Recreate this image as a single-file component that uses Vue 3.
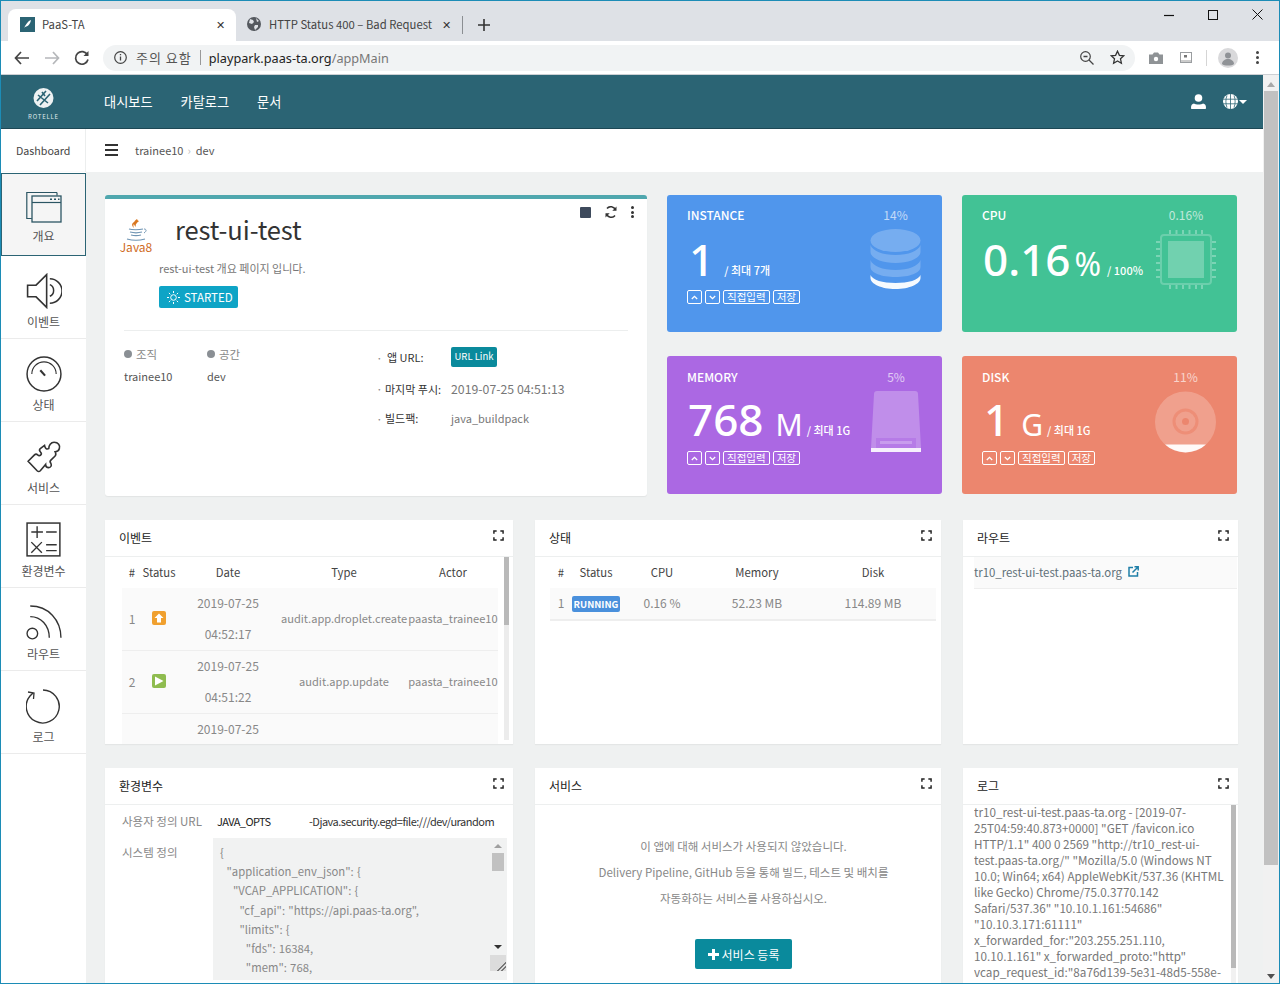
<script setup>
const sideItems = [
  { label: '개요', icon: 'i-overview', active: true },
  { label: '이벤트', icon: 'i-speaker' },
  { label: '상태', icon: 'i-gauge' },
  { label: '서비스', icon: 'i-puzzle' },
  { label: '환경변수', icon: 'i-calc' },
  { label: '라우트', icon: 'i-feed' },
  { label: '로그', icon: 'i-reload' }
]

const stats = [
  { key: 'instance', title: 'INSTANCE', pct: '14%', value: '1', unit: '', gap: true, limit: '/ 최대 7개', controls: true },
  { key: 'cpu', title: 'CPU', pct: '0.16%', value: '0.16', unit: '%', limit: '/ 100%', controls: false },
  { key: 'memory', title: 'MEMORY', pct: '5%', value: '768', unit: 'M', limit: '/ 최대 1G', controls: true },
  { key: 'disk', title: 'DISK', pct: '11%', value: '1', unit: 'G', limit: '/ 최대 1G', controls: true }
]

// the third row is only partly in view, its other cells never show
const events = [
  { no: 1, day: '2019-07-25', time: '04:52:17', kind: 'up', type: 'audit.app.droplet.create', actor: 'paasta_trainee10' },
  { no: 2, day: '2019-07-25', time: '04:51:22', kind: 'play', type: 'audit.app.update', actor: 'paasta_trainee10' },
  { no: '', day: '2019-07-25', time: '', kind: '', type: '', actor: '' }
]

const envLines = [
  '{',
  '  "application_env_json": {',
  '    "VCAP_APPLICATION": {',
  '      "cf_api": "https://api.paas-ta.org",',
  '      "limits": {',
  '        "fds": 16384,',
  '        "mem": 768,'
]

const logLines = [
  'tr10_rest-ui-test.paas-ta.org - [2019-07-',
  '25T04:59:40.873+0000] "GET /favicon.ico',
  'HTTP/1.1" 400 0 2569 "http://tr10_rest-ui-',
  'test.paas-ta.org/" "Mozilla/5.0 (Windows NT',
  '10.0; Win64; x64) AppleWebKit/537.36 (KHTML',
  'like Gecko) Chrome/75.0.3770.142',
  'Safari/537.36" "10.10.1.161:54686"',
  '"10.10.3.171:61111"',
  'x_forwarded_for:"203.255.251.110,',
  '10.10.1.161" x_forwarded_proto:"http"',
  'vcap_request_id:"8a76d139-5e31-48d5-558e-'
]
</script>

<template>
  <div class="window">
    <svg class="defs" aria-hidden="true">
      <symbol id="i-expand" viewBox="0 0 12 12">
        <path d="M1 4V1h3M8 1h3v3M11 8v3H8M4 11H1V8" fill="none" stroke="#222" stroke-width="1.6" />
      </symbol>
      <symbol id="i-overview" viewBox="0 0 36 32">
        <path d="M31 1.5H.8v26h5M31 1.5v3" fill="none" stroke="#2b5563" stroke-width="1.2" />
        <rect x="6" y="5" width="29" height="26" fill="#f5f5f5" stroke="#2b5563" stroke-width="1.3" />
        <path d="M6 11.5h29" stroke="#2b5563" stroke-width="1.2" />
        <path d="M24 8.3h2M28 8.3h2M32 8.3h1.5" stroke="#2b5563" stroke-width="1.5" />
      </symbol>
      <symbol id="i-speaker" viewBox="0 0 34 34">
        <path d="M1.5 11.5h8L19.5 1.5v31l-10-10h-8z" fill="none" stroke="#333" stroke-width="1.5" />
        <path d="M22.5 11a6 6 0 0 1 0 11M22.5 5.5a11.500 11.500 0 0 1 0 23" fill="none" stroke="#333" stroke-width="1.4" />
      </symbol>
      <symbol id="i-gauge" viewBox="0 0 34 34">
        <circle cx="17" cy="17" r="16" fill="none" stroke="#333" stroke-width="1.4" />
        <path d="M5.500 17a11.500 11.500 0 0 1 23 0" fill="none" stroke="#333" stroke-width="1.1" />
        <path d="M13.500 13.500l4.500 5" stroke="#333" stroke-width="2" />
      </symbol>
      <symbol id="i-puzzle" viewBox="0 0 34 34">
        <path d="M2 21l6-6c1-1 2-1 3 0 1 1 2 1 3 0s.5-2-.5-3c-1-1-1-2 0-3l4-3c.6 3 2 4 4 3 0-3 2-6 5-6 4 0 6 3 5 6-.5 2-2 3-4 3 1 2 1 3 0 4l-4 4c-1 1-1 2 0 3 1 2 0 4-2 4-2 0-3-1-3-3l-5 6c-1 1-2 1-3 0z" fill="none" stroke="#333" stroke-width="1.5" />
      </symbol>
      <symbol id="i-calc" viewBox="0 0 34 34">
        <rect x="1" y="1" width="31" height="31" fill="none" stroke="#333" stroke-width="1.4" />
        <path d="M5 9.500h11M10.500 4v11M19 9.500h10M5 19l10 10M15 19L5 29M19 21.500h10M19 27h10" stroke="#333" stroke-width="1.3" />
      </symbol>
      <symbol id="i-feed" viewBox="0 0 34 34">
        <circle cx="6" cy="27" r="5" fill="none" stroke="#333" stroke-width="1.3" />
        <path d="M4 11c10 0 18 8 18 20M4 1c17 0 29 13 29 30" fill="none" stroke="#333" stroke-width="1.3" />
      </symbol>
      <symbol id="i-reload" viewBox="0 0 36 36">
        <path d="M17 2a16.500 16.500 0 1 1-13 6l3-3" fill="none" stroke="#333" stroke-width="1.4" />
        <path d="M2 4l6 1-.5 6" fill="none" stroke="#333" stroke-width="1.3" />
      </symbol>
    </svg>

    <div class="tabstrip">
      <div class="tab active">
        <span class="favicon">
          <svg width="9" height="10" viewBox="0 0 9 10"><path d="M1 9c2-4 4-7 7-8-.5 3-2 6-6 7z" fill="#fff" /></svg>
        </span>
        <span class="tab-title">PaaS-TA</span>
        <span class="tab-x">✕</span>
      </div>
      <div class="tab">
        <svg class="globe" width="14" height="14" viewBox="0 0 14 14">
          <circle cx="7" cy="7" r="7" fill="#55595f" />
          <path d="M3 2l3 1 1 2-2 2-3-1zM8 8l3 0 0 2-3 3-1-3zM9 1l3 3-2 1z" fill="#dee1e6" />
        </svg>
        <span class="tab-title">HTTP Status 400 – Bad Request</span>
        <span class="tab-x">✕</span>
      </div>
      <span class="tab-sep"></span>
      <svg class="tab-plus" width="12" height="12" viewBox="0 0 12 12"><path d="M6 0v12M0 6h12" stroke="#333" stroke-width="1.6" /></svg>
      <div class="win-btns">
        <svg width="10" height="10" viewBox="0 0 10 10"><path d="M0 5.500h10" stroke="#111" stroke-width="1.2" /></svg>
        <svg width="10" height="10" viewBox="0 0 10 10"><rect x=".5" y=".5" width="9" height="9" fill="none" stroke="#111" /></svg>
        <svg width="11" height="11" viewBox="0 0 11 11"><path d="M.5.5l10 10M10.500.5l-10 10" stroke="#111" /></svg>
      </div>
    </div>

    <div class="toolbar">
      <svg class="tool" width="16" height="14" viewBox="0 0 16 14"><path d="M15 7H2M7 1L1.500 7 7 13" fill="none" stroke="#444" stroke-width="1.7" /></svg>
      <svg class="tool" width="16" height="14" viewBox="0 0 16 14"><path d="M1 7h13M9 1l5.500 6L9 13" fill="none" stroke="#b5b7ba" stroke-width="1.7" /></svg>
      <svg class="tool" width="16" height="16" viewBox="0 0 16 16"><path d="M13.500 5A6.300 6.300 0 1 0 14 9.500" fill="none" stroke="#444" stroke-width="1.7" /><path d="M14.500 1v5h-5z" fill="#444" /></svg>
      <div class="omnibox">
        <svg width="13" height="13" viewBox="0 0 13 13"><circle cx="6.500" cy="6.500" r="5.800" fill="none" stroke="#444" stroke-width="1.2" /><path d="M6.500 5.500v4M6.500 3v1.300" stroke="#444" stroke-width="1.300" /></svg>
        <span class="warn">주의 요함</span>
        <span class="omni-sep"></span>
        <span class="url">playpark.paas-ta.org<em>/appMain</em></span>
        <svg class="omni-right" width="14" height="14" viewBox="0 0 14 14"><circle cx="5.500" cy="5.500" r="4.800" fill="none" stroke="#444" stroke-width="1.200" /><path d="M3.500 5.500h4M9 9l4.500 4.500" stroke="#444" stroke-width="1.300" /></svg>
        <svg class="omni-star" width="15" height="15" viewBox="0 0 15 15"><path d="M7.500 1.200l1.900 4.100 4.400.5-3.300 3 .9 4.400-3.900-2.200-3.900 2.200.9-4.400-3.300-3 4.400-.5z" fill="none" stroke="#333" stroke-width="1.300" /></svg>
      </div>
      <svg class="ext cam" width="14" height="12" viewBox="0 0 14 12"><path d="M0 2.500h3.500L5 .5h4l1.500 2H14V12H0z" fill="#8f9396" /><circle cx="7" cy="7" r="2.200" fill="#fff" /></svg>
      <svg class="ext cast" width="12" height="11" viewBox="0 0 12 11"><rect x=".5" y=".5" width="11" height="10" fill="none" stroke="#9a9da0" /><rect x="4" y="3" width="3" height="2.500" fill="#777" /><path d="M1 9h10" stroke="#999" /></svg>
      <span class="tool-sep"></span>
      <span class="avatar">
        <svg width="20" height="20" viewBox="0 0 20 20"><circle cx="10" cy="7.500" r="3" fill="#8f9296" /><path d="M4 16c0-3 3-5 6-5s6 2 6 5c-2 2-10 2-12 0z" fill="#8f9296" /></svg>
      </span>
      <span class="kebab"><i></i><i></i><i></i></span>
    </div>

    <div class="viewport">
      <div class="page">
        <header class="topnav">
          <div class="logo">
            <svg width="21" height="20" viewBox="0 0 21 20">
              <circle cx="10.500" cy="10" r="10" fill="#eef2f3" />
              <path d="M4 13L13 3M7 17L17 6M5 7l10 8M9 4l3 4" stroke="#2b6474" stroke-width="1.600" />
            </svg>
            <span>ROTELLE</span>
          </div>
          <nav class="menu">
            <a>대시보드</a>
            <a>카탈로그</a>
            <a>문서</a>
          </nav>
          <div class="nav-right">
            <svg width="15" height="15" viewBox="0 0 15 15"><circle cx="7.500" cy="4" r="3.800" fill="#fff" /><path d="M0 14c0-3 1-4 3-4.500 1 .7 2.500 1.100 4.500 1.100s3.500-.4 4.500-1.100c2 .5 3 1.500 3 4.500 0 .6-.4 1-1 1H1c-.6 0-1-.4-1-1z" fill="#fff" /></svg>
            <span class="globe-btn">
              <svg width="15" height="15" viewBox="0 0 15 15">
                <circle cx="7.500" cy="7.500" r="7.500" fill="#fff" />
                <path d="M0 5.200h15M0 9.800h15M7.500 0v15M4 1.500c-1.500 3.500-1.500 8.500 0 12M11 1.500c1.500 3.500 1.500 8.500 0 12" fill="none" stroke="#2b6474" stroke-width=".8" />
              </svg>
              <i class="caret"></i>
            </span>
          </div>
        </header>

        <div class="subbar">
          <div class="sub-title">Dashboard</div>
          <div class="crumbs">
            <span class="burger"><i></i><i></i><i></i></span>
            <span>trainee10</span>
            <span class="chev">›</span>
            <span>dev</span>
          </div>
        </div>

        <div class="workspace">
          <aside class="sidebar">
            <div v-for="item in sideItems" :key="item.label" class="side-item" :class="{ active: item.active }">
              <svg class="side-icon"><use :href="'#' + item.icon" /></svg>
              <span>{{ item.label }}</span>
            </div>
          </aside>

          <main class="content">
            <section class="top-grid">
              <article class="app-card">
                <div class="app-actions">
                  <span class="stop"></span>
                  <svg width="12" height="12" viewBox="0 0 12 12"><path d="M10.500 4A5 5 0 0 0 2 2.500M1.500 8A5 5 0 0 0 10 9.500" fill="none" stroke="#333" stroke-width="1.500" /><path d="M11.500.500v4.200H7.300zM.500 11.500V7.300h4.200z" fill="#333" /></svg>
                  <span class="dots"><i></i><i></i><i></i></span>
                </div>
                <div class="app-head">
                  <div class="java">
                    <svg width="24" height="22" viewBox="0 0 24 22">
                      <path d="M13 0c-4 3-4 5-1 8-1-3 1-4 3-6-1 0-1.500-1-2-2zM10 3c-3 2-2 4 0 6-1-2-1-4 1-5z" fill="#d9771f" />
                      <path d="M5 10c3 1 10 1 14 0M6 13c3 .8 9 .8 12 0M7 16c3 .7 7 .7 10 0M3 20c5 1.400 13 1.400 18 0" fill="none" stroke="#6e94b3" stroke-width="1.200" />
                      <path d="M20 10c2.500 0 3 2 0 4" fill="none" stroke="#6e94b3" />
                    </svg>
                    <span>Java8</span>
                  </div>
                  <h1>rest-ui-test</h1>
                </div>
                <p class="app-desc">rest-ui-test 개요 페이지 입니다.</p>
                <div class="started">
                  <svg width="13" height="13" viewBox="0 0 13 13">
                    <circle cx="6.500" cy="6.500" r="2.800" fill="none" stroke="#fff" />
                    <path d="M6.500 0v2M6.500 11v2M0 6.500h2M11 6.500h2M1.900 1.900l1.400 1.400M9.700 9.700l1.400 1.400M1.900 11.100l1.400-1.400M9.700 3.300l1.400-1.400" stroke="#fff" />
                  </svg>
                  STARTED
                </div>
                <hr />
                <div class="app-info">
                  <div class="org">
                    <div class="org-col">
                      <div class="org-label"><i></i>조직</div>
                      <div class="org-val">trainee10</div>
                    </div>
                    <div class="org-col">
                      <div class="org-label"><i></i>공간</div>
                      <div class="org-val">dev</div>
                    </div>
                  </div>
                  <dl class="facts">
                    <div class="fact"><dt class="url-label">앱 URL:</dt><dd><span class="url-link">URL Link</span></dd></div>
                    <div class="fact"><dt>마지막 푸시:</dt><dd class="stamp">2019-07-25 04:51:13</dd></div>
                    <div class="fact"><dt>빌드팩:</dt><dd>java_buildpack</dd></div>
                  </dl>
                </div>
              </article>

              <div class="stats">
                <article v-for="s in stats" :key="s.key" class="stat" :class="s.key">
                  <div class="stat-left">
                    <div class="stat-title">{{ s.title }}</div>
                    <div class="stat-value">
                      <b>{{ s.value }}</b>
                      <span v-if="s.unit" class="unit">{{ s.unit }}</span>
                      <span class="limit" :class="{ far: s.gap }">{{ s.limit }}</span>
                    </div>
                    <div v-if="s.controls" class="stat-ctl">
                      <span class="mini"><svg width="7" height="5" viewBox="0 0 7 5"><path d="M.8 4l2.700-2.700L6.200 4" fill="none" stroke="#fff" stroke-width="1.300" /></svg></span>
                      <span class="mini"><svg width="7" height="5" viewBox="0 0 7 5"><path d="M.8 1l2.700 2.700L6.200 1" fill="none" stroke="#fff" stroke-width="1.300" /></svg></span>
                      <span class="mini text">직접입력</span>
                      <span class="mini text">저장</span>
                    </div>
                  </div>
                  <div class="stat-right">
                    <div class="stat-pct">{{ s.pct }}</div>
                    <svg v-if="s.key === 'instance'" class="stat-icon" width="51" height="61" viewBox="0 0 51 61">
                      <ellipse cx="25.500" cy="11.500" rx="25" ry="11.500" fill="#fff" opacity=".22" />
                      <path d="M.5 16v7c0 6 11 11 25 11s25-5 25-11v-7c-2 6-12 10-25 10S2.500 22 .5 16z" fill="#fff" opacity=".22" />
                      <path d="M.5 31v7c0 6 11 10 25 10s25-4 25-10v-7c-2 6-12 10-25 10S2.500 37 .5 31z" fill="#fff" opacity=".22" />
                      <path d="M.5 46v3c0 6 11 11 25 11s25-5 25-11v-3c-2 5-12 8-25 8S2.500 51 .5 46z" fill="#fff" opacity=".95" />
                    </svg>
                    <svg v-else-if="s.key === 'cpu'" class="stat-icon" width="60" height="61" viewBox="0 0 60 61">
                      <rect x="5" y="6" width="50" height="49" rx="3" fill="none" stroke="#fff" stroke-opacity=".22" stroke-width="2" />
                      <rect x="12" y="12" width="36" height="37" fill="#fff" opacity=".25" />
                      <path d="M14 1v4M20.500 1v4M27 1v4M33.500 1v4M40 1v4M46 1v4M14 56v4M20.500 56v4M27 56v4M33.500 56v4M40 56v4M46 56v4M0 13h4M0 20h4M0 27h4M0 34h4M0 41h4M0 48h4M56 13h4M56 20h4M56 27h4M56 34h4M56 41h4M56 48h4" stroke="#fff" stroke-opacity=".3" stroke-width="2" />
                    </svg>
                    <svg v-else-if="s.key === 'memory'" class="stat-icon" width="50" height="62" viewBox="0 0 50 62">
                      <path d="M6 0h38c2 0 3 1 3 3l3 54H0L3 3c0-2 1-3 3-3z" fill="#fff" opacity=".25" />
                      <path d="M0 57h50v4H0z" fill="#fff" opacity=".9" />
                      <rect x="5" y="47" width="40" height="10" fill="#ab68e3" opacity=".5" />
                      <rect x="9" y="50" width="32" height="3" fill="#fff" opacity=".25" />
                    </svg>
                    <svg v-else class="stat-icon" width="61" height="62" viewBox="0 0 61 62">
                      <circle cx="30.500" cy="31" r="30.500" fill="#fff" opacity=".22" />
                      <path d="M10 53.500h41a30.500 30.500 0 0 1-41 0z" fill="#fff" opacity=".95" />
                      <circle cx="30.500" cy="30.500" r="11.500" fill="none" stroke="#ec866e" stroke-opacity=".7" stroke-width="3" />
                      <circle cx="30.500" cy="30.500" r="3.500" fill="#ec866e" />
                    </svg>
                  </div>
                </article>
              </div>
            </section>

            <section class="panels">
              <article class="panel">
                <div class="panel-head"><h2>이벤트</h2><svg class="expand"><use href="#i-expand" /></svg></div>
                <div class="panel-body events">
                  <table class="grid-table ev">
                    <colgroup><col style="width:20px" /><col style="width:34px" /><col style="width:104px" /><col style="width:128px" /><col style="width:90px" /></colgroup>
                    <thead><tr><th>#</th><th>Status</th><th>Date</th><th>Type</th><th>Actor</th></tr></thead>
                    <tbody>
                      <tr v-for="e in events" :key="e.day + e.time">
                        <td>{{ e.no }}</td>
                        <td>
                          <span v-if="e.kind" class="ev-icon" :class="e.kind">
                            <svg v-if="e.kind === 'up'" width="10" height="10" viewBox="0 0 10 10"><path d="M5 .5L9.500 5H7v4.500H3V5H.5z" fill="#fff" /></svg>
                            <svg v-else width="10" height="10" viewBox="0 0 10 10"><path d="M1 .5l8.500 4.500L1 9.500z" fill="#fff" /></svg>
                          </span>
                        </td>
                        <td class="date"><div>{{ e.day }}</div><div>{{ e.time }}</div></td>
                        <td class="nowrap">{{ e.type }}</td>
                        <td class="nowrap">{{ e.actor }}</td>
                      </tr>
                    </tbody>
                  </table>
                  <div class="thin-bar"><i></i></div>
                </div>
              </article>

              <article class="panel">
                <div class="panel-head"><h2>상태</h2><svg class="expand"><use href="#i-expand" /></svg></div>
                <div class="panel-body state">
                  <table class="grid-table st">
                    <colgroup><col style="width:22px" /><col style="width:48px" /><col style="width:84px" /><col style="width:106px" /><col style="width:126px" /></colgroup>
                    <thead><tr><th>#</th><th>Status</th><th>CPU</th><th>Memory</th><th>Disk</th></tr></thead>
                    <tbody>
                      <tr>
                        <td>1</td>
                        <td><span class="running">RUNNING</span></td>
                        <td>0.16 %</td>
                        <td>52.23 MB</td>
                        <td>114.89 MB</td>
                      </tr>
                    </tbody>
                  </table>
                </div>
              </article>

              <article class="panel">
                <div class="panel-head"><h2>라우트</h2><svg class="expand"><use href="#i-expand" /></svg></div>
                <div class="panel-body route">
                  <div class="route-row">
                    <span>tr10_rest-ui-test.paas-ta.org</span>
                    <svg width="11" height="11" viewBox="0 0 11 11"><path d="M5 1.500H1v8.500h8.500V6" fill="none" stroke="#1f7fa8" stroke-width="1.500" /><path d="M4.500 6.500L10 1M6.500.8h3.700v3.700" fill="none" stroke="#1f7fa8" stroke-width="1.500" /></svg>
                  </div>
                </div>
              </article>

              <article class="panel tall">
                <div class="panel-head"><h2>환경변수</h2><svg class="expand"><use href="#i-expand" /></svg></div>
                <div class="panel-body env">
                  <div class="env-row">
                    <span class="env-label">사용자 정의 URL</span>
                    <span class="env-key">JAVA_OPTS</span>
                    <span class="env-val">-Djava.security.egd=file:///dev/urandom</span>
                  </div>
                  <div class="env-row sys">
                    <span class="env-label">시스템 정의</span>
                    <div class="env-box">
                      <pre><template v-for="l in envLines" :key="l">{{ l }}
</template></pre>
                      <div class="box-bar">
                        <i class="arrow up"></i>
                        <i class="thumb"></i>
                        <i class="arrow down"></i>
                        <i class="grip"></i>
                      </div>
                    </div>
                  </div>
                </div>
              </article>

              <article class="panel tall">
                <div class="panel-head"><h2>서비스</h2><svg class="expand"><use href="#i-expand" /></svg></div>
                <div class="panel-body services">
                  <p>이 앱에 대해 서비스가 사용되지 않았습니다.</p>
                  <p>Delivery Pipeline, GitHub 등을 통해 빌드, 테스트 및 배치를</p>
                  <p>자동화하는 서비스를 사용하십시오.</p>
                  <button class="add-svc">
                    <svg width="11" height="11" viewBox="0 0 11 11"><path d="M5.500 0v11M0 5.500h11" stroke="#fff" stroke-width="3" /></svg>
                    서비스 등록
                  </button>
                </div>
              </article>

              <article class="panel tall">
                <div class="panel-head"><h2>로그</h2><svg class="expand"><use href="#i-expand" /></svg></div>
                <div class="panel-body log">
                  <div class="log-text">
                    <div v-for="l in logLines" :key="l">{{ l }}</div>
                  </div>
                  <div class="thin-bar log-bar"><i></i></div>
                </div>
              </article>
            </section>
          </main>
        </div>
      </div>

      <div class="pagebar">
        <i class="pb-up"></i>
        <i class="pb-thumb"></i>
        <i class="pb-down"></i>
      </div>
    </div>
  </div>
</template>

<style>
html, body { margin: 0; padding: 0; overflow: hidden; }
</style>

<style scoped>
.window {
  box-sizing: border-box;
  width: 1280px;
  height: 984px;
  border: 1px solid #1c8cb6;
  display: flex;
  flex-direction: column;
  overflow: hidden;
  font-family: "Noto Sans CJK KR", "Noto Sans", sans-serif;
  font-size: 12px;
  color: #333;
  background: #fff;
}
.defs { display: none; }

/* browser chrome */
.tabstrip {
  height: 40px;
  flex: none;
  background: #dee1e6;
  display: flex;
  align-items: flex-end;
  padding-left: 7px;
}
.tab {
  height: 32px;
  width: 228px;
  box-sizing: border-box;
  padding: 0 12px 2px;
  display: flex;
  align-items: center;
  border-radius: 8px 8px 0 0;
  font-size: 11.300px;
  color: #444;
}
.tab.active { background: #fff; color: #444; }
.tab:not(.active) { width: 226px; padding-left: 11px; }
.favicon {
  width: 15px;
  height: 15px;
  background: #2b6474;
  margin-right: 7px;
  display: flex;
  align-items: center;
  justify-content: center;
}
.globe { margin-right: 8px; }
.tab-title { flex: 1; white-space: nowrap; }
.tab-x { font-size: 11px; color: #333; margin-right: -1px; }
.tab-sep { width: 1px; height: 18px; background: #8b8e92; margin: 0 0 7px 0; }
.tab-plus { margin: 0 0 10px 15px; }
.win-btns {
  margin-left: auto;
  align-self: flex-start;
  display: flex;
  align-items: center;
  gap: 34px;
  padding: 8px 16px 0 0;
}
.toolbar {
  height: 34px;
  flex: none;
  display: flex;
  align-items: center;
  padding-left: 13px;
  background: #fff;
  border-bottom: 1px solid #cdd0d4;
  box-sizing: border-box;
}
.tool { margin-right: 14px; }
.omnibox {
  width: 1032px;
  height: 26px;
  margin-left: -1px;
  border-radius: 13px;
  background: #f1f3f4;
  display: flex;
  align-items: center;
  padding: 0 10px 0 11px;
  box-sizing: border-box;
}
.warn { margin-left: 9px; font-size: 13px; color: #555; letter-spacing: 1px; }
.omni-sep { width: 1px; height: 15px; background: #999; margin: 0 8px; }
.url { font-family: "Noto Sans", sans-serif; font-size: 12.700px; color: #222; }
.url em { font-style: normal; color: #777; }
.omni-right { margin-left: auto; }
.omni-star { margin-left: 16px; }
.ext.cam { margin-left: 14px; }
.ext.cast { margin-left: 17px; }
.tool-sep { width: 1px; height: 16px; background: #d5d5d5; margin-left: 14px; }
.avatar {
  width: 20px;
  height: 20px;
  border-radius: 50%;
  background: #d9d9db;
  margin-left: 11px;
}
.avatar svg { display: block; }
.kebab { margin-left: 18px; display: flex; flex-direction: column; gap: 2px; }
.kebab i { width: 3px; height: 3px; border-radius: 50%; background: #444; }

.viewport { flex: 1; min-height: 0; display: flex; }
.page { flex: 1; min-width: 0; display: flex; flex-direction: column; }
.pagebar {
  width: 16px;
  flex: none;
  background: #f1f1f1;
  display: flex;
  flex-direction: column;
  align-items: center;
}
.pagebar i { display: block; }
.pb-up {
  margin-top: 7px;
  border: 4px solid transparent;
  border-top: 0;
  border-bottom: 5px solid #a8a8a8;
  margin-bottom: 4px;
}
.pb-thumb { width: 14px; height: 774px; background: #c1c1c1; }
.pb-down {
  margin-top: 109px;
  border: 4px solid transparent;
  border-bottom: 0;
  border-top: 5px solid #505050;
}

/* app nav */
.topnav {
  height: 54px;
  flex: none;
  box-sizing: border-box;
  background: #2b6474;
  border-bottom: 1px solid #1d4855;
  display: flex;
  align-items: center;
}
.logo {
  width: 85px;
  display: flex;
  flex-direction: column;
  align-items: center;
  padding-top: 4px;
}
.logo span { font-size: 6px; color: #dfe8ea; letter-spacing: .8px; margin-top: 5px; line-height: 7px; }
.menu { margin-left: 18px; display: flex; gap: 28px; font-size: 13.200px; color: #fff; }
.nav-right { margin-left: auto; display: flex; align-items: center; gap: 17px; padding-right: 16px; }
.nav-right svg { display: block; }
.globe-btn { display: flex; align-items: center; gap: 1px; }
.caret { border: 4px solid transparent; border-bottom: 0; border-top: 4px solid #fff; }

.subbar { height: 43px; flex: none; display: flex; background: #fff; }
.sub-title {
  width: 85px;
  box-sizing: border-box;
  border-right: 1px solid #eceeee;
  padding-left: 15px;
  line-height: 43px;
  color: #444;
  font-size: 10.700px;
  white-space: nowrap;
}
.crumbs { display: flex; align-items: center; padding: 0 0 2px 19px; color: #555; font-size: 11px; }
.burger { display: flex; flex-direction: column; gap: 3px; margin-right: 17px; }
.burger i { display: block; width: 13px; height: 2px; background: #333; }
.chev { color: #bbb; margin: 0 5px 0 4px; }

.workspace { flex: 1; min-height: 0; display: flex; }
.sidebar {
  width: 85px;
  flex: none;
  padding-top: 1px;
  background: #fff;
  box-shadow: 1px 0 1px #e5e7e7;
}
.side-item {
  box-sizing: border-box;
  height: 83px;
  border-bottom: 1px solid #ebebeb;
  display: flex;
  flex-direction: column;
  align-items: center;
  padding-top: 17px;
  color: #555;
  font-size: 12px;
}
.side-item.active {
  background: #f5f5f5;
  border: 1px solid #2b6474;
  padding-top: 15px;
}
.side-icon { width: 36px; height: 36px; margin-bottom: 5px; }
.active .side-icon { margin-bottom: 3px; }
.side-item span { line-height: 16px; }

.content {
  flex: 1;
  min-width: 0;
  background: #eff1f1;
  padding: 23px 25px 0 19px;
  overflow: hidden;
}
.top-grid { display: grid; grid-template-columns: 542px 1fr; gap: 20px; }
.app-card {
  box-sizing: border-box;
  height: 301px;
  background: #fff;
  border-top: 4px solid #4fa7ae;
  border-radius: 3px;
  padding: 0 19px;
  box-shadow: 0 1px 1px #e2e4e4;
  position: relative;
}
.app-actions {
  position: absolute;
  top: 7px;
  right: 13px;
  display: flex;
  align-items: center;
  gap: 14px;
}
.app-actions svg { display: block; }
.stop { width: 11px; height: 11px; background: #3e4a5c; border-radius: 1px; }
.dots { display: flex; flex-direction: column; gap: 1.500px; }
.dots i { width: 3px; height: 3px; border-radius: 50%; background: #333; }
.app-head { display: flex; align-items: flex-start; padding-top: 20px; margin-left: -3px; }
.java { width: 30px; display: flex; flex-direction: column; align-items: center; }
.java span { color: #cf6b1d; font-size: 12px; line-height: 13px; margin-top: -1px; }
.app-head h1 {
  margin: -8px 0 0 24px;
  font-size: 25.500px;
  letter-spacing: -.1px;
  font-weight: 400;
  line-height: 36px;
  color: #333;
}
.app-desc { margin: 7px 0 0 35px; font-size: 11px; line-height: 16px; color: #777; }
.started {
  margin: 10px 0 0 35px;
  width: 79px;
  height: 22px;
  box-sizing: border-box;
  background: #0ea4c6;
  border-radius: 2px;
  color: #fff;
  display: flex;
  align-items: center;
  gap: 4px;
  padding-left: 8px;
  font-size: 11.500px;
}
.app-card hr { border: 0; border-top: 1px solid #eceeee; margin: 22px 0 0; }
.app-info { display: flex; padding-top: 13px; }
.org { width: 252px; display: flex; margin-top: 2px; }
.org-col { width: 83px; }
.org-label { display: flex; align-items: center; font-size: 11.500px; color: #888; line-height: 16px; }
.org-label i { width: 8px; height: 8px; border-radius: 50%; background: #8a8f94; margin-right: 4px; }
.org-val { margin-top: 6px; font-size: 11px; color: #555; line-height: 16px; }
.facts { margin: -4px 0 0; }
.fact { display: flex; align-items: center; height: 29.500px; position: relative; padding-left: 9px; }
.fact:first-child { height: 34px; }
.fact::before { content: "·"; position: absolute; left: 0; color: #888; }
.fact dt { width: 66px; color: #333; font-size: 11px; white-space: nowrap; }
.fact .url-label { padding-left: 2px; width: 64px; }
.fact dd { margin: 0; color: #777; font-size: 11px; }
.fact dd.stamp { font-size: 12.300px; }
.url-link {
  display: block;
  width: 46px;
  height: 20px;
  line-height: 19px;
  text-align: center;
  background: #0a8a9c;
  color: #fff;
  border-radius: 2px;
  font-size: 9.500px;
}

.stats { display: grid; grid-template-columns: 275px 275px; gap: 24px 20px; align-content: start; }
.stat {
  box-sizing: border-box;
  height: 137px;
  border-radius: 3px;
  color: #fff;
  padding: 12px 21px 0 20px;
  display: flex;
  justify-content: space-between;
}
.stat.memory, .stat.disk { height: 138px; padding-top: 13px; }
.stat.instance { background: #5096ec; }
.stat.cpu { background: #42c295; }
.stat.memory { background: #ab68e3; }
.stat.disk { background: #ec866e; }
.stat-title { font-size: 12px; font-weight: 500; line-height: 16px; }
.stat-value { display: flex; align-items: baseline; height: 56px; margin-top: 7px; padding-left: 1px; white-space: nowrap; }
.memory .stat-value, .disk .stat-value { margin-top: 5px; }
.stat-value b { font-family: "Noto Sans", sans-serif; font-size: 44px; font-weight: 500; line-height: 58px; }
.instance .stat-value b, .disk .stat-value b { padding-left: 1px; }
.unit { font-family: "Noto Sans", sans-serif; font-size: 30px; margin-left: 12px; line-height: 30px; }
.cpu .unit { font-size: 32px; margin-left: 4px; }
.limit { font-size: 11px; font-weight: 500; margin-left: 4px; transform: translateY(-1px); }
.cpu .limit { margin-left: 6px; }
.limit.far { margin-left: 10px; }
.stat-ctl { display: flex; gap: 3px; margin-top: 4px; }
.memory .stat-ctl, .disk .stat-ctl { margin-top: 5px; }
.mini {
  box-sizing: border-box;
  width: 15px;
  height: 14px;
  border: 1px solid #fff;
  border-radius: 2px;
  display: flex;
  align-items: center;
  justify-content: center;
  font-size: 10.500px;
  line-height: 12px;
}
.mini.text { width: auto; padding: 0 3px; white-space: nowrap; }
.stat-right { display: flex; flex-direction: column; align-items: center; }
.stat-pct { font-size: 12px; line-height: 16px; opacity: .65; }
.stat-icon { margin-top: 6px; display: block; }

/* panels */
.panels {
  display: grid;
  grid-template-columns: 408px 406px 275px;
  grid-auto-rows: 224px;
  gap: 24px 22px;
  margin-top: 24px;
}
.panel { background: #fff; box-shadow: 0 1px 1px #e4e6e6; display: flex; flex-direction: column; min-height: 0; }
.panel-head {
  height: 37px;
  flex: none;
  box-sizing: border-box;
  border-bottom: 1px solid #edefef;
  display: flex;
  align-items: center;
  justify-content: space-between;
  padding: 0 9px 2px 14px;
}
.panel-head h2 { margin: 0; font-size: 12px; font-weight: 400; color: #222; }
.expand { width: 11px; height: 11px; margin-top: -4px; }
.panel-body { flex: 1; min-height: 0; overflow: hidden; position: relative; }

.grid-table { border-collapse: collapse; table-layout: fixed; font-size: 12px; }
.grid-table th { font-weight: 400; font-size: 11.300px; height: 31px; color: #444; text-align: center; white-space: nowrap; padding: 0 0 2px; box-sizing: border-box; }
.grid-table td { text-align: center; color: #888; padding: 0 0 2px; background: #fafafa; border-bottom: 1px solid #eee; }
.ev { margin-left: 17px; width: 376px; }
.ev td { height: 60px; }
.ev td.date { height: 62px; vertical-align: top; padding: 0; }
.date div { line-height: 31px; }
.date div:first-child { margin-top: -1px; }
.nowrap { white-space: nowrap; font-size: 11.100px; }
.ev-icon {
  display: inline-flex;
  width: 14px;
  height: 14px;
  align-items: center;
  justify-content: center;
  border-radius: 2px;
  vertical-align: middle;
  margin-bottom: 2px;
}
.ev-icon.up { background: #f0a02f; }
.ev-icon.play { background: #8fbc4f; }
.thin-bar { position: absolute; top: 0; right: 4px; bottom: 4px; width: 5px; background: #ececec; }
.thin-bar i { display: block; height: 68px; background: #b9b9b9; }

.st { margin-left: 15px; width: 386px; }
.st td { height: 29px; padding-bottom: 2px; border-bottom: 2px solid #eee; }
.running {
  display: inline-block;
  width: 48px;
  height: 16px;
  line-height: 16px;
  background: #4a90dc;
  color: #fff;
  border-radius: 2px;
  font-size: 9.500px;
  font-weight: 700;
  vertical-align: middle;
}

.route-row {
  margin: 0 1px 0 11px;
  height: 32px;
  box-sizing: border-box;
  padding-bottom: 2px;
  display: flex;
  align-items: center;
  gap: 6px;
  background: #fafafa;
  border-bottom: 1px solid #eee;
  color: #607078;
  font-size: 11.400px;
}

.env { padding: 0 0 0 17px; }
.env-row { display: flex; align-items: flex-start; }
.env-row:first-child { height: 33px; align-items: center; padding-bottom: 2px; box-sizing: border-box; }
.env-label { width: 95px; flex: none; color: #888; font-size: 11.500px; white-space: nowrap; }
.env-key { width: 92px; flex: none; color: #222; font-size: 11px; letter-spacing: -.6px; }
.env-val { color: #333; font-size: 11px; letter-spacing: -.5px; white-space: nowrap; }
.env-row.sys .env-label { width: 91px; margin-top: 6px; }
.env-box {
  width: 294px;
  height: 142px;
  flex: none;
  background: #f1f2f2;
  display: flex;
  justify-content: space-between;
  overflow: hidden;
}
.env-box pre {
  margin: 0;
  padding: 5px 0 0 7px;
  font: inherit;
  font-size: 11.300px;
  line-height: 19.200px;
  color: #888;
  white-space: pre;
  word-spacing: .7px;
}
.box-bar { width: 14px; margin-right: 2px; position: relative; display: flex; flex-direction: column; align-items: center; }
.box-bar i { display: block; }
.arrow.up { margin-top: 6px; border: 4px solid transparent; border-top: 0; border-bottom: 4px solid #a0a0a0; }
.box-bar .thumb { margin-top: 5px; width: 12px; height: 18px; background: #c1c1c1; }
.arrow.down { margin-top: 74px; border: 4px solid transparent; border-bottom: 0; border-top: 4px solid #333; }
.box-bar .grip {
  margin-top: 6px;
  width: 16px;
  height: 16px;
  background: linear-gradient(135deg, #dcdcdc 70%, #777 70%, #777 76%, #dcdcdc 76%, #dcdcdc 84%, #777 84%, #777 90%, #dcdcdc 90%);
}

.services { text-align: center; padding: 28px 0 0 11px; color: #888; }
.services p { margin: 0; line-height: 26px; font-size: 11.500px; }
.add-svc {
  display: inline-flex;
  align-items: center;
  justify-content: center;
  gap: 3px;
  margin-top: 28px;
  width: 97px;
  height: 30px;
  background: #0a8a9c;
  border: 0;
  border-radius: 2px;
  color: #fff;
  font: inherit;
  font-size: 12px;
}

.log { padding-left: 11px; margin-top: -1px; }
.log-text {
  width: 257px;
  overflow: hidden;
  white-space: nowrap;
  font-size: 11.700px;
  line-height: 16px;
  color: #777;
}
.log-bar { right: 2px; top: 1px; bottom: 8px; background: #f1f1f1; }
.log-bar i { height: 163px; background: #b9b9b9; }
</style>
